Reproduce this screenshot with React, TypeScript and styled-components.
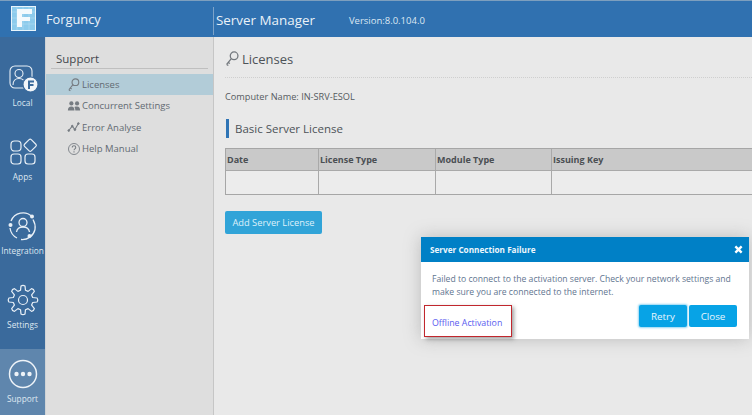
import React from "react";
import styled, { createGlobalStyle } from "styled-components";

const Global = createGlobalStyle`
  html, body { margin: 0; padding: 0; overflow: hidden; background: #e9e9e9; }
  * { box-sizing: border-box; }
`;
const Page = styled.div`
  position: relative; width: 752px; height: 415px; overflow: hidden;
  display: flex; flex-direction: column;
  font-family: "Open Sans", "Noto Sans", sans-serif; color: #4a4f55; background: #e9e9e9;
`;
const TopBar = styled.header`
  height: 37px; flex: none; display: flex; align-items: stretch; background: #3071b0;
  border-top: 1px solid #7d9fbe; color: #eaf1f8;
`;
const Brand = styled.div`
  width: 214px; flex: none; display: flex; align-items: center; gap: 10px; padding: 0 0 1px 11px;
  font-size: 12.8px; position: relative;
  &::after { content: ""; position: absolute; right: 0; top: 6px; bottom: 2px; width: 1px; background: #7da3c9; }
`;
const LogoBox = styled.svg`width: 25px; height: 25px; flex: none;`;
const Title = styled.div`display: flex; align-items: center; padding: 1px 0 0 2px; font-size: 13.4px;`;
const Version = styled.span`font-size: 9.5px; margin-left: 34px; padding-top: 1px; color: #dce7f2;`;
const Body = styled.div`flex: 1; display: flex; min-height: 0;`;
const Rail = styled.nav`width: 45px; flex: none; padding-top: 16px; background: #3a6a9c; overflow: hidden;`;
const RailItem = styled.div<{ $active?: boolean }>`
  height: 74px; flex: none; display: flex; flex-direction: column; align-items: center;
  padding-top: 9px; color: #dfe8f1; font-size: 8.3px;
  background: ${p => (p.$active ? "#5f86ad" : "transparent")};
  white-space: nowrap;
  svg { width: 32px; height: 32px; flex: none; margin-bottom: 3px; }
`;
const Side = styled.aside`
  width: 169px; flex: none; background: #dedede; border-left: 1px solid #cfd3d6; border-right: 1px solid #c6c6c6;
  padding-top: 12px; display: flex; flex-direction: column;
`;
const SideTitle = styled.div`
  margin: 0 5px 0 5px; padding: 0 0 0 5px; height: 20px; line-height: 20px; font-size: 11.5px; color: #44484d;
  border-bottom: 1px solid #bfbfbf;
`;
const SideList = styled.div`margin-top: 5px; display: flex; flex-direction: column;`;
const SideItem = styled.div<{ $active?: boolean }>`
  height: 21.3px; display: flex; align-items: center; padding-left: 21px; gap: 1px; font-size: 9.5px; color: #626a72;
  background: ${p => (p.$active ? "#b2ccd8" : "transparent")};
  svg { width: 14px; height: 14px; flex: none; color: #767c82; }
`;
const Main = styled.main`flex: 1; min-width: 0; padding: 8px 0 0 11px; overflow: hidden; background: #e9e9e9;`;
const Heading = styled.div`
  display: flex; align-items: center; gap: 2px; height: 27px; font-size: 13px; color: #4d5358;
  svg { width: 15px; height: 16px; color: #73787d; }
`;
const Dotted = styled.div`margin-top: 5px; border-top: 1px dotted #cfcfcf;`;
const Computer = styled.div`margin: 11px 0 0 0; font-size: 9.2px; line-height: 16px; color: #555a60;`;
const SubHead = styled.div`
  margin: 14px 0 0 1px; height: 19px; display: flex; align-items: center; padding-left: 6px;
  border-left: 3px solid #2f74b5; font-size: 11.5px; color: #4d5358;
`;
const Table = styled.div`
  margin-top: 10px; width: 540px; border: 1px solid #a6a6a6; border-width: 1px 0 1px 1px;
  display: grid; grid-template-columns: 93px 117px 116px 1fr;
`;
const HeadCell = styled.div`
  height: 22px; padding: 0 0 0 1px; display: flex; align-items: center; font-size: 9px; font-weight: 700;
  color: #4b4f53; background: #c9c9c9; border-right: 1px solid #a9a9a9; border-bottom: 1px solid #a9a9a9;
`;
const BodyCell = styled.div`height: 23px; background: #ececec; border-right: 1px solid #a9a9a9;`;
const AddButton = styled.button`
  display: block; margin-top: 16px; width: 97px; height: 23px; padding: 0; border: 0; border-radius: 2px;
  background: #31a4d8; color: #dff1fa; font: 9.3px "Open Sans", sans-serif;
`;
const Modal = styled.div`
  position: absolute; left: 421px; top: 237px; width: 328px; height: 102px; background: #fff;
  box-shadow: 0 0 16px rgba(120,120,120,.4); display: flex; flex-direction: column;
`;
const ModalHead = styled.div`
  height: 25px; flex: none; background: #0080c6; color: #eef7fc; display: flex; align-items: center;
  justify-content: space-between; padding: 0 6px 0 9px; font-size: 8.2px; font-weight: 700;
  svg { width: 9px; height: 9px; }
`;
const ModalText = styled.p`
  margin: 0; padding: 11px 10px 0 11px; font-size: 8.65px; line-height: 12.5px; color: #5f7590;
`;
const ModalFoot = styled.div`
  flex: 1; display: flex; align-items: flex-start; justify-content: space-between; padding: 7px 12px 0 11px;
`;
const Offline = styled.a`font-size: 8.8px; color: #5a5cf0; margin-top: 12px; line-height: 12px;`;
const Actions = styled.div`display: flex; gap: 2px;`;
const ActionBtn = styled.button<{ $focus?: boolean }>`
  width: 48px; height: 22px; padding: 0; border: 0; border-radius: 2px; background: #07a3e6;
  color: #e8f6fd; font: 9.8px "Open Sans", sans-serif;
  box-shadow: ${p => (p.$focus ? "0 0 2px 1px #93d6f3" : "none")};
`;
const Callout = styled.div`
  position: absolute; left: 424px; top: 305px; width: 88px; height: 32px; border: 1px solid #c1272d;
  box-shadow: 2px 2px 4px rgba(80,80,80,.55);
`;

const gearPath = (() => {
  const pts: string[] = [];
  const teeth = 8;
  for (let i = 0; i < teeth; i++) {
    const a = (i * 2 * Math.PI) / teeth - Math.PI / 2;
    const step = (2 * Math.PI) / teeth;
    const polar = (r: number, t: number) => `${(16 + r * Math.cos(t)).toFixed(2)} ${(16 + r * Math.sin(t)).toFixed(2)}`;
    pts.push(`${i === 0 ? "M" : "L"}${polar(10, a - step * 0.32)}`);
    pts.push(`L${polar(14.2, a - step * 0.18)}`);
    pts.push(`Q${polar(15.4, a)} ${polar(14.2, a + step * 0.18)}`);
    pts.push(`L${polar(10, a + step * 0.32)}`);
  }
  return pts.join(" ") + "Z";
})();

const Logo = () => (
  <LogoBox viewBox="0 0 25 25">
    <rect x=".5" y=".5" width="24" height="24" fill="#8ccbec" stroke="#e8f5fc" />
    <g stroke="#b4def3" strokeWidth=".6">
      <path d="M1 6h23M1 12h23M1 18h23M6 1v23M12 1v23M18 1v23" />
    </g>
    <path d="M6 3h15v5H11v3h8v4h-8v6H6z" fill="#f4fafd" />
  </LogoBox>
);
const Key = () => (
  <svg viewBox="2 1 13 15" fill="none" stroke="currentColor" strokeWidth="1.200">
    <circle cx="10" cy="5.500" r="3.600" />
    <path d="M7.400 8.200 3 13.600M3 13.600l1.600 1M4.600 11.800l1.400 1" />
  </svg>
);
const People = () => (
  <svg viewBox="0 0 16 16" fill="currentColor">
    <circle cx="5" cy="5" r="2.400" /><circle cx="11.500" cy="5" r="2.400" />
    <path d="M1 13c0-3 1.500-4.500 4-4.500S8.500 10 8.500 13zM9.500 13c0-1.500-.3-3-1-4 .8-.4 1.800-.5 3-.5 2.300 0 3.500 1.500 3.500 4.500z" />
  </svg>
);
const Chart = () => (
  <svg viewBox="0 0 16 16" fill="currentColor" stroke="currentColor">
    <path d="M2 12l4-5 3 4 4-7" fill="none" strokeWidth="1.200" />
    <circle cx="2" cy="12" r="1" /><circle cx="6" cy="7" r="1" /><circle cx="9" cy="11" r="1" /><circle cx="13" cy="4" r="1" />
  </svg>
);
const Help = () => (
  <svg viewBox="0 0 16 16" fill="none" stroke="currentColor" strokeWidth="1">
    <circle cx="8" cy="8" r="6.300" />
    <path d="M6 6.300c0-1.300 1-2 2-2s2 .7 2 1.900c0 1.600-2 1.600-2 3.200M8 10.600v1.400" strokeWidth="1.200" />
  </svg>
);
const LocalIcon = () => (
  <svg viewBox="0 0 32 32" fill="none" stroke="#e8eff6" strokeWidth="1.100">
    <rect x="3" y="4" width="22" height="22" rx="5" />
    <circle cx="12" cy="11.500" r="4" />
    <path d="M6 23c0-4 2.500-6.500 6-6.500 2 0 3.500.6 4.500 1.600" />
    <circle cx="23.500" cy="22.500" r="7.500" fill="#f1f5f9" stroke="#3a6a9c" />
    <path d="M21 18.500h6v2h-4v1.500h3.500v2H23v3h-2z" fill="#3a6a9c" stroke="none" />
  </svg>
);
const AppsIcon = () => (
  <svg viewBox="0 0 32 32" fill="none" stroke="#e8eff6" strokeWidth="1.200">
    <rect x="4" y="5" width="10" height="10" rx="3.500" />
    <rect x="18.500" y="4.500" width="9.500" height="9.500" rx="1.500" transform="rotate(45 23.200 9.200)" />
    <rect x="4" y="18" width="10" height="10" rx="3" />
    <rect x="18" y="18" width="10" height="10" rx="3" />
  </svg>
);
const IntegrationIcon = () => (
  <svg viewBox="0 0 32 32" fill="none" stroke="#e8eff6" strokeWidth="1.300">
    <path d="M25 6.500A13 13 0 0 0 4 11M3 18a13 13 0 0 0 7 10M14 29.500a13 13 0 0 0 14-10c.6-3.500 0-6.500-2-10" />
    <circle cx="16" cy="12.500" r="4" />
    <path d="M9.500 22c.5-3.500 3-5 6.500-5s6 1.500 6.500 5" />
    <circle cx="25" cy="6.500" r="2" fill="#e8eff6" stroke="none" />
    <circle cx="3.500" cy="15" r="2" fill="#e8eff6" stroke="none" />
    <circle cx="22.500" cy="26" r="2" fill="#e8eff6" stroke="none" />
  </svg>
);
const GearIcon = () => (
  <svg viewBox="0 0 32 32" fill="none" stroke="#e8eff6" strokeWidth="1.200" strokeLinejoin="round">
    <path d={gearPath} />
    <circle cx="16" cy="16" r="4.500" />
  </svg>
);
const DotsIcon = () => (
  <svg viewBox="0 0 32 32" fill="none" stroke="#eef3f8" strokeWidth="1.500">
    <circle cx="16" cy="16" r="13.500" />
    <g fill="#eef3f8" stroke="none"><circle cx="9.500" cy="16" r="2.200" /><circle cx="16" cy="16" r="2.200" /><circle cx="22.500" cy="16" r="2.200" /></g>
  </svg>
);

export default function App() {
  return (
    <Page>
      <Global />
      <TopBar>
        <Brand><Logo />Forguncy</Brand>
        <Title>Server Manager<Version>Version:8.0.104.0</Version></Title>
      </TopBar>
      <Body>
        <Rail>
          <RailItem><LocalIcon />Local</RailItem>
          <RailItem><AppsIcon />Apps</RailItem>
          <RailItem><IntegrationIcon />Integration</RailItem>
          <RailItem><GearIcon />Settings</RailItem>
          <RailItem $active><DotsIcon />Support</RailItem>
        </Rail>
        <Side>
          <SideTitle>Support</SideTitle>
          <SideList>
            <SideItem $active><Key />Licenses</SideItem>
            <SideItem><People />Concurrent Settings</SideItem>
            <SideItem><Chart />Error Analyse</SideItem>
            <SideItem><Help />Help Manual</SideItem>
          </SideList>
        </Side>
        <Main>
          <Heading><Key />Licenses</Heading>
          <Dotted />
          <Computer>Computer Name: IN-SRV-ESOL</Computer>
          <SubHead>Basic Server License</SubHead>
          <Table>
            <HeadCell>Date</HeadCell><HeadCell>License Type</HeadCell><HeadCell>Module Type</HeadCell><HeadCell>Issuing Key</HeadCell>
            <BodyCell /><BodyCell /><BodyCell /><BodyCell />
          </Table>
          <AddButton>Add Server License</AddButton>
        </Main>
      </Body>
      <Modal>
        <ModalHead>Server Connection Failure
          <svg viewBox="0 0 10 10" stroke="#fff" strokeWidth="2.600"><path d="M1.500 1.500l7 7M8.500 1.500l-7 7" /></svg>
        </ModalHead>
        <ModalText>Failed to connect to the activation server. Check your network settings and make sure you are connected to the internet.</ModalText>
        <ModalFoot>
          <Offline>Offline Activation</Offline>
          <Actions><ActionBtn $focus>Retry</ActionBtn><ActionBtn>Close</ActionBtn></Actions>
        </ModalFoot>
      </Modal>
      <Callout />
    </Page>
  );
}
